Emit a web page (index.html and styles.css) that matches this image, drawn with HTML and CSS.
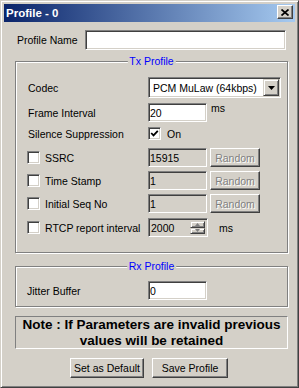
FILE: index.html
```html
<!DOCTYPE html>
<html lang="en">
<head>
    <meta charset="UTF-8">
    <title>Profile - 0</title>
    <link rel="stylesheet" href="styles.css">
</head>
<body>
    <div class="window">
        <div class="titlebar">
            <span class="title">Profile - 0</span>
            <button class="close-btn">
                <svg width="8" height="7" viewBox="0 0 8 7"><path d="M0.5 0.5 L7.5 6.5 M7.5 0.5 L0.5 6.5" stroke="#000" stroke-width="1.7"/></svg>
            </button>
        </div>

        <div class="content">
            <div class="name-row">
                <label class="name-label" for="profileName">Profile Name</label>
                <input type="text" id="profileName" class="edit name-input">
            </div>

            <!-- Tx settings -->
            <div class="group tx">
                <span class="group-title">Tx Profile</span>

                <div class="row row-codec">
                    <span class="lbl">Codec</span>
                    <div class="combo">
                        <span class="combo-text">PCM MuLaw (64kbps)</span>
                        <span class="combo-btn">
                            <svg width="7" height="4" viewBox="0 0 7 4"><polygon points="0,0 7,0 3.5,4" fill="#000"/></svg>
                        </span>
                    </div>
                </div>

                <div class="row row-frame">
                    <span class="lbl">Frame Interval</span>
                    <input type="text" class="edit small-edit" value="20">
                    <span class="unit unit-top">ms</span>
                </div>

                <div class="row row-silence">
                    <span class="lbl">Silence Suppression</span>
                    <span class="check">
                        <svg width="9" height="9" viewBox="0 0 9 9"><polyline points="1.2,4 3.5,6.4 7.8,1.8" fill="none" stroke="#000" stroke-width="1.8"/></svg>
                    </span>
                    <span class="check-text">On</span>
                </div>

                <div class="row row-opt">
                    <span class="lbl"><span class="check"></span><span class="opt-text">SSRC</span></span>
                    <input type="text" class="edit small-edit disabled" value="15915">
                    <button class="btn random" disabled>Random</button>
                </div>

                <div class="row row-opt">
                    <span class="lbl"><span class="check"></span><span class="opt-text">Time Stamp</span></span>
                    <input type="text" class="edit small-edit disabled" value="1">
                    <button class="btn random" disabled>Random</button>
                </div>

                <div class="row row-opt">
                    <span class="lbl"><span class="check"></span><span class="opt-text">Initial Seq No</span></span>
                    <input type="text" class="edit small-edit disabled" value="1">
                    <button class="btn random" disabled>Random</button>
                </div>

                <div class="row row-rtcp">
                    <span class="lbl"><span class="check"></span><span class="opt-text">RTCP report interval</span></span>
                    <div class="spin">
                        <span class="spin-text">2000</span>
                        <span class="spin-btns">
                            <span class="spin-up"><svg width="5" height="3" viewBox="0 0 5 3"><polygon points="2.5,0 5,3 0,3" fill="#808080"/></svg></span>
                            <span class="spin-down"><svg width="5" height="3" viewBox="0 0 5 3"><polygon points="0,0 5,0 2.5,3" fill="#808080"/></svg></span>
                        </span>
                    </div>
                    <span class="unit unit-rtcp">ms</span>
                </div>
            </div>

            <!-- Rx settings -->
            <div class="group rx">
                <span class="group-title">Rx Profile</span>
                <div class="row row-jitter">
                    <span class="lbl lbl-jitter">Jitter Buffer</span>
                    <input type="text" class="edit small-edit" value="0">
                </div>
            </div>

            <div class="note">Note : If Parameters are invalid previous<br>values will be retained</div>

            <div class="buttons">
                <button class="btn btn-default">Set as Default</button>
                <button class="btn btn-save">Save Profile</button>
            </div>
        </div>
    </div>
</body>
</html>
```

FILE: styles.css
```css
body {
    margin: 0;
    background: #d4d0c8;
}

.window {
    width: 299px;
    height: 388px;
    box-sizing: border-box;
    padding: 3px;
    background: #d4d0c8;
    border: 1px solid;
    border-color: #d4d0c8 #404040 #404040 #d4d0c8;
    box-shadow: inset 1px 1px #fff, inset -1px -1px #808080;
    font-family: "Liberation Sans", Arial, sans-serif;
    font-size: 10.5px;
    color: #000;
}

.titlebar {
    height: 18px;
    display: flex;
    align-items: flex-start;
    justify-content: space-between;
    padding: 0 2px;
    background: linear-gradient(to right, #0a246a, #a6caf0);
}

.title {
    color: #fff;
    font-weight: bold;
    font-size: 11.5px;
    line-height: 18px;
}

.close-btn {
    width: 16px;
    height: 14px;
    margin-top: 1px;
    padding: 0;
    display: flex;
    align-items: center;
    justify-content: center;
    background: #d4d0c8;
    border: 1px solid;
    border-color: #fff #404040 #404040 #fff;
    box-shadow: inset -1px -1px #808080, inset 1px 1px #d4d0c8;
}

.content {
    padding: 8px 7px 0 11px;
}

.name-row {
    display: flex;
    align-items: center;
    height: 20px;
}

.name-label {
    width: 68px;
    margin-left: 2px;
}

/* sunken edit box */
.edit {
    box-sizing: border-box;
    height: 19px;
    margin: 0;
    padding: 0 1px;
    font: inherit;
    color: #000;
    background: #fff;
    border: 1px solid;
    border-color: #808080 #fff #fff #808080;
    box-shadow: inset 1px 1px #404040, inset -1px -1px #d4d0c8;
    outline: none;
}

.edit.disabled {
    background: #d4d0c8;
}

.name-input {
    width: 201px;
    height: 20px;
}

.small-edit {
    width: 59px;
}

.group {
    position: relative;
    border: 1px solid #808080;
    box-shadow: inset 1px 1px #fff, 1px 1px #fff;
}

.group-title {
    position: absolute;
    top: -7px;
    left: 50%;
    transform: translateX(-50%);
    padding: 0 2px;
    line-height: 13px;
    color: #0000ff;
    background: #d4d0c8;
    white-space: nowrap;
}

.tx {
    margin-top: 11px;
    padding: 15px 0 15px 0;
}

.rx {
    margin-top: 13px;
    padding: 14px 0 6px 0;
}

.row {
    display: flex;
    align-items: center;
    height: 19px;
}

.row-codec {
    height: 21px;
}

.row-frame {
    margin-top: 5px;
}

.row-silence {
    margin-top: 5px;
    height: 13px;
}

.row-opt {
    margin-top: 4px;
}

.row-opt:nth-of-type(4) {
    margin-top: 8px;
}

.row-rtcp {
    margin-top: 5px;
}

.lbl {
    width: 132px;
    padding-left: 12px;
    box-sizing: border-box;
    display: flex;
    align-items: center;
    white-space: nowrap;
}

.lbl-jitter {
    padding-left: 11px;
}

.row-opt .lbl,
.row-rtcp .lbl {
    padding-left: 11px;
}

.check {
    width: 13px;
    height: 13px;
    box-sizing: border-box;
    display: flex;
    align-items: center;
    justify-content: center;
    background: #fff;
    border: 1px solid;
    border-color: #808080 #fff #fff #808080;
    box-shadow: inset 1px 1px #404040, inset -1px -1px #d4d0c8;
}

.check-text {
    margin-left: 6px;
}

.opt-text {
    margin-left: 5px;
}

.combo {
    width: 133px;
    height: 21px;
    box-sizing: border-box;
    display: flex;
    align-items: center;
    background: #fff;
    border: 1px solid;
    border-color: #808080 #fff #fff #808080;
    box-shadow: inset 1px 1px #404040, inset -1px -1px #d4d0c8;
    padding: 0 1px 0 4px;
}

.combo-text {
    flex: 1;
    white-space: nowrap;
}

.combo-btn {
    width: 16px;
    height: 17px;
    box-sizing: border-box;
    display: flex;
    align-items: center;
    justify-content: center;
    background: #d4d0c8;
    border: 1px solid;
    border-color: #d4d0c8 #404040 #404040 #d4d0c8;
    box-shadow: inset 1px 1px #fff, inset -1px -1px #808080;
}

.unit {
    margin-left: 4px;
}

.unit-top {
    align-self: flex-start;
    line-height: 11px;
}

.unit-rtcp {
    margin-left: 11px;
}

/* raised push button */
.btn {
    box-sizing: border-box;
    height: 20px;
    padding: 0;
    font: inherit;
    color: #000;
    background: #d4d0c8;
    border: 1px solid;
    border-color: #fff #404040 #404040 #fff;
    box-shadow: inset -1px -1px #808080, inset 1px 1px #d4d0c8;
}

.random {
    width: 50px;
    height: 19px;
    margin-left: 3px;
    color: #808080;
    text-shadow: 1px 1px #fff;
}

.spin {
    width: 60px;
    height: 19px;
    box-sizing: border-box;
    display: flex;
    background: #d4d0c8;
    border: 1px solid;
    border-color: #808080 #fff #fff #808080;
    box-shadow: inset 1px 1px #404040, inset -1px -1px #d4d0c8;
    padding: 2px 2px 2px 2px;
}

.spin-text {
    flex: 1;
    line-height: 15px;
}

.spin-btns {
    width: 15px;
    display: flex;
    flex-direction: column;
}

.spin-up,
.spin-down {
    box-sizing: border-box;
    display: flex;
    align-items: center;
    justify-content: center;
    background: #d4d0c8;
    border: 1px solid;
    border-color: #d4d0c8 #404040 #404040 #d4d0c8;
    box-shadow: inset 1px 1px #fff, inset -1px -1px #808080;
}

.spin-up {
    height: 8px;
}

.spin-down {
    height: 7px;
}

.note {
    margin-top: 9px;
    height: 33px;
    box-sizing: border-box;
    border: 1px solid;
    border-color: #808080 #fff #fff #808080;
    font-weight: bold;
    font-size: 13.5px;
    line-height: 16px;
    text-align: center;
    white-space: nowrap;
}

.buttons {
    margin-top: 9px;
    display: flex;
    gap: 8px;
    padding-left: 55px;
}

.btn-default {
    width: 74px;
}

.btn-save {
    width: 76px;
}
```
